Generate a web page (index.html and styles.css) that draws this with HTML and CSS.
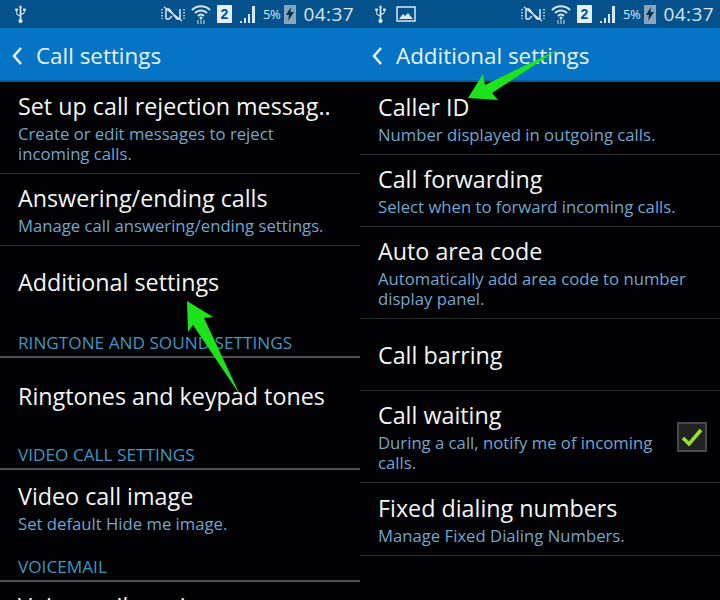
FILE: index.html
```html
<!DOCTYPE html>
<html lang="en">
<head>
  <meta charset="UTF-8" />
  <meta name="viewport" content="width=device-width, initial-scale=1" />
  <title>Call settings</title>
  <link rel="stylesheet" href="styles.css">
</head>
<body>
  <main class="screens">
    <section class="phone">
      <div class="status-bar">
        <svg class="ic-usb" viewBox="0 0 14 24"><path d="M7 1l2 3H8v13.500a2.200 2.200 0 1 1-2 0V14c-2.500-.6-4-2-4-4V8H1V5h3v3H3v2c0 1.200 1.200 2.200 3 2.700V4H5zM8 11c1.800-.5 3-1.300 3-2.800V8h-1V5h3v3h-1v.3C12 10.500 10.500 12 8 12.600z"/></svg>
        <div class="status-right">
          <svg class="ic-mute" viewBox="0 0 24 16"><path d="M1 3v10M23 3v10" stroke-dasharray="1.500 1.500"/><path d="M5 3h3l8 10h3V3M5 13V3M5 13h3l3-3M3 1l18 14"/></svg>
          <svg class="ic-wifi" viewBox="0 0 20 22"><path d="M1 7c5-5 13-5 18 0M4 10c3.500-3.500 8.500-3.500 12 0M7 13c2-2 4-2 6 0"/><circle cx="10" cy="15" r="1.500"/><path class="dim" d="M7 17v4M13 17v4M10 17v4"/></svg>
          <span class="sim">2</span>
          <svg class="ic-signal" viewBox="0 0 17 18"><path d="M0 18v-2h2v2zM4 18v-5h2v5zM8 18V9h2v9zM12 18V1h3v17z"/></svg>
          <span class="battery-pct">5%</span>
          <span class="battery"><svg viewBox="0 0 10 14"><path d="M6 0L1 8h3l-1 6 6-9H5.500z"/></svg></span>
          <span class="clock">04:37</span>
        </div>
      </div>
      <header class="action-bar">
        <svg class="back" viewBox="0 0 12 20"><path d="M10 2L3 10l7 8"/></svg>
        <span>Call settings</span>
      </header>
      <div class="list">
        <div class="row row-92">
          <div class="row-title">Set up call rejection messag..</div>
          <div class="row-sub">Create or edit messages to reject<br>incoming calls.</div>
        </div>
        <div class="row row-72">
          <div class="row-title">Answering/ending calls</div>
          <div class="row-sub">Manage call answering/ending settings.</div>
        </div>
        <div class="row row-72 last">
          <div class="row-title">Additional settings</div>
        </div>
        <div class="group">RINGTONE AND SOUND SETTINGS</div>
        <div class="row row-72 last after-group">
          <div class="row-title">Ringtones and keypad tones</div>
        </div>
        <div class="group">VIDEO CALL SETTINGS</div>
        <div class="row row-72 last after-group">
          <div class="row-title">Video call image</div>
          <div class="row-sub">Set default Hide me image.</div>
        </div>
        <div class="group">VOICEMAIL</div>
        <div class="row row-72 last after-group cut-row">
          <div class="row-title">Voice mail service</div>
        </div>
      </div>
      <svg class="arrow arrow-left" viewBox="0 0 360 600"><path d="M187 301L213 317 204 318 240 395 193 325 188 332z"/></svg>
    </section>

    <section class="phone">
      <div class="status-bar">
        <svg class="ic-usb" viewBox="0 0 14 24"><path d="M7 1l2 3H8v13.500a2.200 2.200 0 1 1-2 0V14c-2.500-.6-4-2-4-4V8H1V5h3v3H3v2c0 1.200 1.200 2.200 3 2.700V4H5zM8 11c1.800-.5 3-1.300 3-2.800V8h-1V5h3v3h-1v.3C12 10.500 10.500 12 8 12.600z"/></svg>
        <svg class="ic-picture" viewBox="0 0 20 16"><path class="frame" d="M1 1h18v14H1z"/><path d="M3 13l4-5 2 2 3-3 5 6z"/></svg>
        <div class="status-right">
          <svg class="ic-mute" viewBox="0 0 24 16"><path d="M1 3v10M23 3v10" stroke-dasharray="1.500 1.500"/><path d="M5 3h3l8 10h3V3M5 13V3M5 13h3l3-3M3 1l18 14"/></svg>
          <svg class="ic-wifi" viewBox="0 0 20 22"><path d="M1 7c5-5 13-5 18 0M4 10c3.500-3.500 8.500-3.500 12 0M7 13c2-2 4-2 6 0"/><circle cx="10" cy="15" r="1.500"/><path class="dim" d="M7 17v4M13 17v4M10 17v4"/></svg>
          <span class="sim">2</span>
          <svg class="ic-signal" viewBox="0 0 17 18"><path d="M0 18v-2h2v2zM4 18v-5h2v5zM8 18V9h2v9zM12 18V1h3v17z"/></svg>
          <span class="battery-pct">5%</span>
          <span class="battery"><svg viewBox="0 0 10 14"><path d="M6 0L1 8h3l-1 6 6-9H5.500z"/></svg></span>
          <span class="clock">04:37</span>
        </div>
      </div>
      <header class="action-bar">
        <svg class="back" viewBox="0 0 12 20"><path d="M10 2L3 10l7 8"/></svg>
        <span>Additional settings</span>
      </header>
      <div class="list">
        <div class="row row-73">
          <div class="row-title">Caller ID</div>
          <div class="row-sub">Number displayed in outgoing calls.</div>
        </div>
        <div class="row row-72">
          <div class="row-title">Call forwarding</div>
          <div class="row-sub">Select when to forward incoming calls.</div>
        </div>
        <div class="row row-92">
          <div class="row-title">Auto area code</div>
          <div class="row-sub">Automatically add area code to number<br>display panel.</div>
        </div>
        <div class="row row-72">
          <div class="row-title">Call barring</div>
        </div>
        <div class="row row-92 with-check">
          <div>
            <div class="row-title">Call waiting</div>
            <div class="row-sub">During a call, notify me of incoming<br>calls.</div>
          </div>
          <span class="check"><svg viewBox="0 0 24 20"><path d="M3 11l6 6L21 3"/></svg></span>
        </div>
        <div class="row row-73">
          <div class="row-title">Fixed dialing numbers</div>
          <div class="row-sub">Manage Fixed Dialing Numbers.</div>
        </div>
      </div>
      <svg class="arrow arrow-right" viewBox="0 0 360 600"><path d="M199 49L125 85 123 74 108 98 138 100 132 93z"/></svg>
    </section>
  </main>
</body>
</html>
```

FILE: styles.css
```css
* { box-sizing: border-box; }

html, body {
  margin: 0;
  height: 600px;
  overflow: hidden;
  background: #000;
}

body {
  font-family: 'Open Sans', 'Noto Sans', sans-serif;
  color: #f4f4f4;
}

.screens {
  display: grid;
  grid-template-columns: 360px 360px;
  height: 600px;
}

.phone {
  position: relative;
  height: 600px;
  overflow: hidden;
  background: #020204;
}

.status-bar {
  height: 28px;
  background: #04518c;
  display: flex;
  align-items: center;
  padding: 0 6px 0 14px;
  gap: 9px;
  color: #d8e6f0;
}

.status-right {
  margin-left: auto;
  display: flex;
  align-items: center;
  gap: 6px;
}

.ic-usb { width: 13px; height: 21px; fill: #d8e6f0; }

.ic-picture { width: 20px; height: 16px; fill: #d8e6f0; }
.ic-picture .frame { fill: none; stroke: #d8e6f0; stroke-width: 1.500; }

.ic-mute { width: 24px; height: 16px; fill: none; stroke: #d8e6f0; stroke-width: 1.500; }

.ic-wifi { width: 20px; height: 22px; fill: #d8e6f0; }
.ic-wifi path { fill: none; stroke: #d8e6f0; stroke-width: 2; }
.ic-wifi .dim { stroke: #6f97b5; }

.sim {
  width: 15px;
  height: 18px;
  background: #e4eef5;
  color: #04518c;
  border-radius: 1px;
  font: 700 14px/18px 'Liberation Sans', sans-serif;
  text-align: center;
}

.ic-signal { width: 17px; height: 18px; fill: #d8e6f0; margin-left: 2px; }

.battery-pct {
  font-size: 13px;
  letter-spacing: -0.3px;
  margin-right: -2px;
}

.battery {
  width: 12px;
  height: 19px;
  background: #87a5bb;
  display: flex;
  align-items: center;
  justify-content: center;
  margin-left: -1px;
}

.battery svg { width: 10px; height: 14px; fill: #04304f; }

.clock {
  font-size: 19px;
  margin-left: 2px;
  letter-spacing: 0.4px;
}

.action-bar {
  height: 54px;
  background: #0574c4;
  border-bottom: 2px solid #045b9c;
  display: flex;
  align-items: center;
  padding: 3px 0 0 11px;
  gap: 13px;
  font-size: 22.400px;
  color: #e6f1f9;
}

.back { width: 12px; height: 20px; fill: none; stroke: #e6f1f9; stroke-width: 2.500; }

.row {
  border-bottom: 1px solid #2a2a2c;
  padding: 0 18px;
  display: flex;
  flex-direction: column;
  justify-content: center;
}

.row.last { border-bottom: none; }
.row.after-group { padding-top: 3px; }
.row.cut-row { padding-bottom: 27px; }

.row-92 { height: 92px; }
.row-73 { height: 73px; }
.row-72 { height: 72px; }

.with-check {
  flex-direction: row;
  align-items: center;
  justify-content: space-between;
  padding-right: 13px;
}

.row-title {
  font-size: 23.300px;
  line-height: 30px;
  margin-bottom: 3px;
  white-space: nowrap;
}

.row-title:last-child { margin-bottom: 0; }

.row-sub {
  font-size: 16.700px;
  line-height: 20px;
  color: #74a5cc;
  white-space: nowrap;
}

.group {
  height: 40px;
  padding: 14px 18px 0;
  border-bottom: 2px solid #4d4f52;
  font-size: 17.200px;
  line-height: 22px;
  color: #3f96c0;
}

.check {
  width: 30px;
  height: 30px;
  border: 2px solid #4a4a4a;
  background: #222;
  display: flex;
  align-items: center;
  justify-content: center;
}

.check svg { width: 24px; height: 20px; fill: none; stroke: #8fe62a; stroke-width: 3.500; }

.arrow {
  position: absolute;
  left: 0;
  top: 0;
  width: 360px;
  height: 600px;
  fill: #1ce31c;
}
```
